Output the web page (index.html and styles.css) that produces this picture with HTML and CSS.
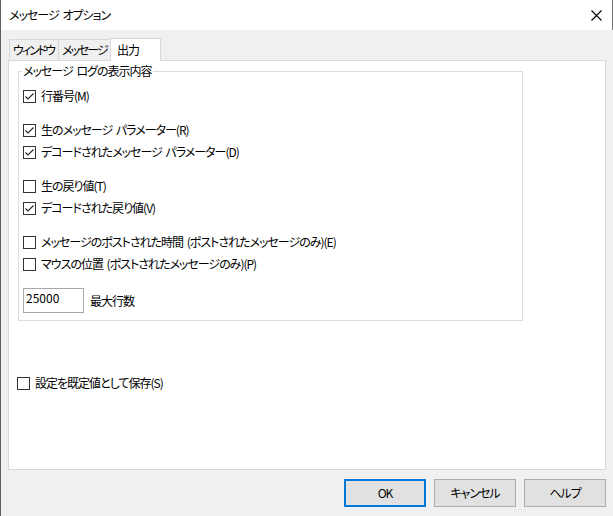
FILE: index.html
```html
<!DOCTYPE html>
<html lang="ja">
<head>
<meta charset="utf-8">
<title>メッセージ オプション</title>
<link rel="stylesheet" href="styles.css">
</head>
<body>
<div class="window">
  <div class="titlebar">
    <span class="title">メッセージ オプション</span>
    <span class="close"><svg width="11" height="11" viewBox="0 0 11 11"><path d="M0.5 0.5 L10.5 10.5 M10.5 0.5 L0.5 10.5" stroke="#000" stroke-width="1.1" fill="none"/></svg></span>
  </div>
  <div class="content">
    <div class="tabs">
      <div class="tab t1">ウィンドウ</div>
      <div class="tab t2">メッセージ</div>
      <div class="tab active">出力</div>
    </div>
    <div class="panel">
      <div class="group">
        <div class="group-title">メッセージ ログの表示内容</div>
        <div class="rows">
          <label class="check"><span class="box"><svg width="11" height="11" viewBox="0 0 11 11"><path d="M1.5 5.5 L4 8 L9.5 2.5" stroke="#222" stroke-width="1.1" fill="none"/></svg></span>行番号(M)</label>
          <div class="spacer"></div>
          <label class="check"><span class="box"><svg width="11" height="11" viewBox="0 0 11 11"><path d="M1.5 5.5 L4 8 L9.5 2.5" stroke="#222" stroke-width="1.1" fill="none"/></svg></span>生のメッセージ パラメーター(R)</label>
          <label class="check"><span class="box"><svg width="11" height="11" viewBox="0 0 11 11"><path d="M1.5 5.5 L4 8 L9.5 2.5" stroke="#222" stroke-width="1.1" fill="none"/></svg></span>デコードされたメッセージ パラメーター(D)</label>
          <div class="spacer"></div>
          <label class="check"><span class="box"></span>生の戻り値(T)</label>
          <label class="check"><span class="box"><svg width="11" height="11" viewBox="0 0 11 11"><path d="M1.5 5.5 L4 8 L9.5 2.5" stroke="#222" stroke-width="1.1" fill="none"/></svg></span>デコードされた戻り値(V)</label>
          <div class="spacer"></div>
          <label class="check"><span class="box"></span>メッセージのポストされた時間 (ポストされたメッセージのみ)(E)</label>
          <label class="check"><span class="box"></span>マウスの位置 (ポストされたメッセージのみ)(P)</label>
          <div class="limit">
            <div class="textbox">25000</div>
            <span>最大行数</span>
          </div>
        </div>
      </div>
      <label class="check save"><span class="box"></span>設定を既定値として保存(S)</label>
    </div>
    <div class="buttons">
      <div class="btn default">OK</div>
      <div class="btn">キャンセル</div>
      <div class="btn">ヘルプ</div>
    </div>
  </div>
</div>
</body>
</html>
```
FILE: styles.css
```css
html, body {
  margin: 0;
  padding: 0;
}
body {
  width: 613px;
  height: 516px;
  overflow: hidden;
  background: #f0f0f0;
  font-family: "Noto Sans CJK JP", "Noto Sans", sans-serif;
  font-size: 12px;
  line-height: 16px;
  letter-spacing: -1px;
  word-spacing: 2px;
  color: #000;
  font-feature-settings: "palt";
}
.window {
  height: 516px;
  box-sizing: border-box;
  border-left: 1px solid #5f5f5f;
  display: flex;
  flex-direction: column;
}
.titlebar {
  height: 30px;
  flex: none;
  background: #fff;
  display: flex;
  align-items: center;
  justify-content: space-between;
  padding: 0 10px 0 8px;
  border-right: 1px solid #777;
}
.close {
  display: flex;
}
.content {
  flex: 1;
  display: flex;
  flex-direction: column;
  padding: 8px 7px 9px 7px;
  min-height: 0;
}
.tabs {
  display: flex;
  align-items: flex-end;
  height: 22px;
  flex: none;
  padding-left: 1px;
}
.tab {
  height: 21px;
  box-sizing: border-box;
  border: 1px solid #d9d9d9;
  border-bottom: none;
  background: #f0f0f0;
  line-height: 19px;
  padding: 0 0 0 3px;
  margin-right: -1px;
  white-space: nowrap;
  letter-spacing: -2px;
}
.t1 { width: 50px; }
.t2 { width: 53px; }
.tab.active {
  height: 23px;
  width: 51px;
  background: #fff;
  margin-bottom: -1px;
  position: relative;
  z-index: 1;
  padding: 0 0 0 6px;
  line-height: 21px;
  letter-spacing: -1px;
}
.panel {
  flex: 1;
  background: #fff;
  border: 1px solid #d9d9d9;
  padding: 10px 9px 0 9px;
}
.group {
  width: 505px;
  box-sizing: border-box;
  border: 1px solid #dcdcdc;
  padding: 0 0 7px 4px;
}
.group-title {
  display: block;
  width: fit-content;
  height: 14px;
  margin: -8px 0 0 -1px;
  padding: 0 1px;
  line-height: 14px;
  background: #fff;
}
.rows {
  margin-top: 7px;
}
.check {
  display: flex;
  align-items: center;
  height: 22px;
  gap: 5px;
}
.box {
  width: 13px;
  height: 13px;
  box-sizing: border-box;
  border: 1px solid #333;
  background: #fff;
  display: flex;
  align-items: center;
  justify-content: center;
  flex: none;
}
.spacer {
  height: 12px;
}
.limit {
  display: flex;
  align-items: center;
  gap: 6px;
  margin-top: 13px;
}
.textbox {
  width: 61px;
  height: 25px;
  box-sizing: border-box;
  border: 1px solid #a8a8a8;
  padding: 1px 2px;
  line-height: 16px;
  letter-spacing: 0;
}
.save {
  margin-top: 51px;
  margin-left: -1px;
}
.buttons {
  display: flex;
  justify-content: flex-end;
  gap: 8px;
  margin-top: 9px;
  flex: none;
}
.btn {
  width: 82px;
  height: 28px;
  box-sizing: border-box;
  border: 1px solid #adadad;
  background: #e1e1e1;
  display: flex;
  align-items: center;
  justify-content: center;
}
.btn.default {
  border: 2px solid #0078d7;
}
```
